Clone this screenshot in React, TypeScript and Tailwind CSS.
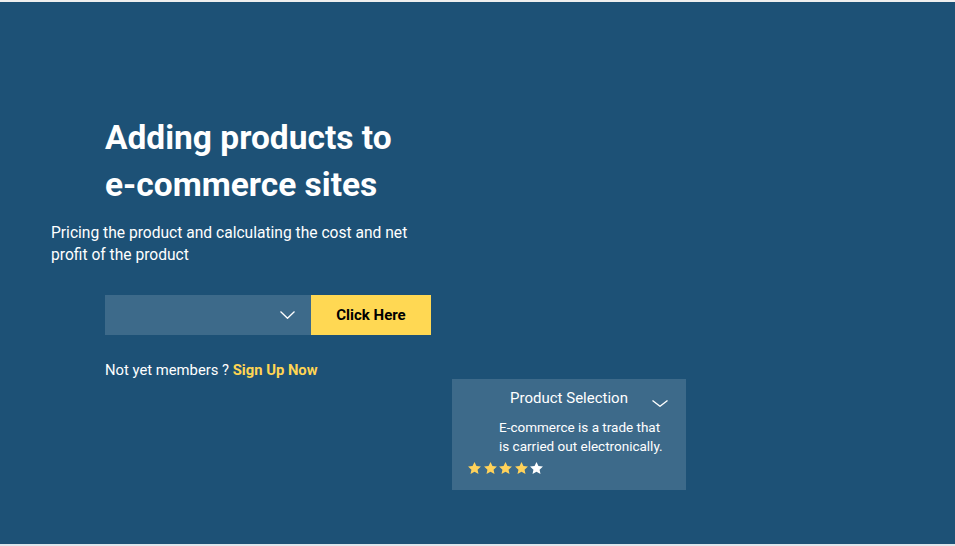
const Star = ({ color }: { color: string }) => (
  <svg width="15" height="15" viewBox="0 0 24 24" fill={color}>
    <path d="M12 1.5l3.1 6.6 7.2.8-5.4 4.9 1.5 7.1L12 17.3 5.6 20.9l1.5-7.1-5.4-4.9 7.2-.8z" />
  </svg>
);

const Chevron = ({ w, h }: { w: number; h: number }) => (
  <svg width={w} height={h} viewBox={`0 0 ${w} ${h}`} fill="none" stroke="white" strokeWidth="1.3">
    <path d={`M0.5 0.5L${w / 2} ${h - 0.7}L${w - 0.5} 0.5`} />
  </svg>
);

const App = () => {
  return (
    <div className="min-h-[546px] bg-[#dfe6ec] font-['Roboto',sans-serif]">
      <div className="h-[2px] bg-[#efefef]" />
      <section className="h-[542px] bg-[#1d5176] pt-[112px] text-white">
        <h1 className="ml-[105px] text-[33.5px] font-bold leading-[47px]">
          Adding products to
          <br />
          e-commerce sites
        </h1>

        <p className="ml-[51px] mt-[14px] w-[380px] text-[15.6px] leading-[22px]">
          Pricing the product and calculating the cost and net profit of the product
        </p>

        <div className="ml-[105px] mt-[29px] flex h-[40px] w-[326px]">
          <div className="flex flex-1 items-center justify-end bg-[#3d6a8a] pr-[16px]">
            <Chevron w={15} h={8} />
          </div>
          <button className="w-[120px] bg-[#ffd853] text-[15px] font-bold text-black">
            Click Here
          </button>
        </div>

        <p className="ml-[105px] mt-[26px] text-[14.8px] leading-[18px]">
          Not yet members ? <span className="font-bold text-[#ffd553]">Sign Up Now</span>
        </p>

        <div className="ml-[452px] h-[111px] w-[234px] bg-[#3d6a8a] pt-[10px]">
          <div className="relative text-center text-[15px] leading-[18px]">
            Product Selection
            <span className="absolute right-[18px] top-[11px]">
              <Chevron w={16} h={7} />
            </span>
          </div>
          <p className="mt-[11px] pl-[47px] text-[13.5px] leading-[19px]">
            E-commerce is a trade that
            <br />
            is carried out electronically.
          </p>
          <div className="mt-[5px] flex gap-[0.5px] pl-[15px]">
            <Star color="#ffd25a" />
            <Star color="#ffd25a" />
            <Star color="#ffd25a" />
            <Star color="#ffd25a" />
            <Star color="#ffffff" />
          </div>
        </div>
      </section>
    </div>
  );
};

export default App;
